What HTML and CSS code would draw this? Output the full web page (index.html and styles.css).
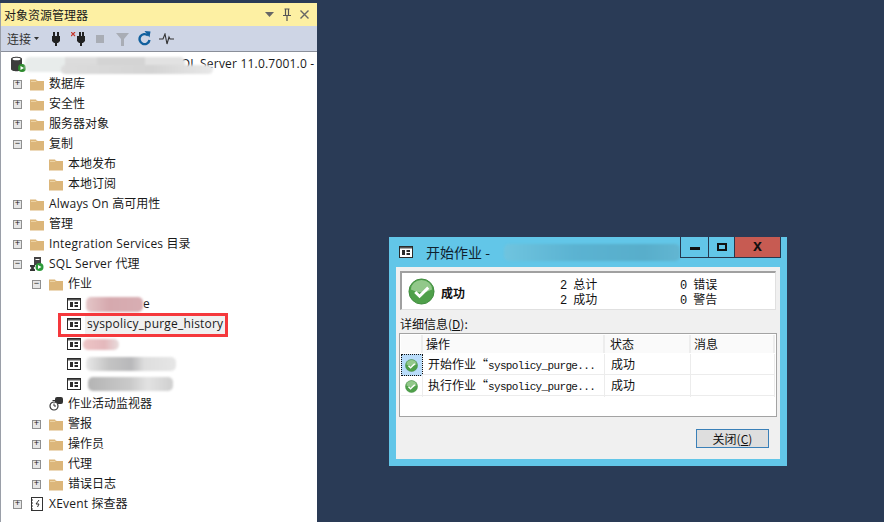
FILE: index.html
```html
<!DOCTYPE html>
<html lang="zh">
<head>
<meta charset="utf-8">
<title>对象资源管理器</title>
<link rel="stylesheet" href="styles.css">
</head>
<body>
<svg class="defs" width="0" height="0" aria-hidden="true">
  <symbol id="folder" viewBox="0 0 14 14"><path d="M0 2.500h6l1 1.500h7v9.500H0z" fill="#dcb67a"/><path d="M1 4.500h5l1-1" fill="none" stroke="#ecd3a5"/></symbol>
  <symbol id="job" viewBox="0 0 14 14"><rect x=".5" y="1.500" width="13" height="11" fill="#fff" stroke="#2a2a2a"/><rect x="1" y="2" width="12" height="1.500" fill="#555"/><rect x="3" y="5" width="3" height="5" fill="#2a2a2a"/><rect x="7.500" y="5" width="3.500" height="2" fill="#2a2a2a"/><rect x="7.500" y="8" width="3.500" height="2" fill="#2a2a2a"/></symbol>
  <symbol id="check" viewBox="0 0 28 28"><circle cx="14" cy="14" r="13" fill="#4fa04a" stroke="#3d8a3c"/><path d="M3 12a11 10 0 0 1 22 0q-11 6-22 0z" fill="#a8d6a0" opacity=".75"/><path d="M7.500 14.500l4.500 4.500 9-9" fill="none" stroke="#fff" stroke-width="3"/></symbol>
</svg>

<section class="panel">
  <header class="panel-title">
    <span>对象资源管理器</span>
    <span class="title-tools">
      <svg width="9" height="6" viewBox="0 0 9 6"><path d="M0 0h9L4.500 5z" fill="#666"/></svg>
      <svg width="8" height="13" viewBox="0 0 8 13"><path d="M1.500 1h5M2.500 1v6M5.500 1v6M0 7.500h8M4 8v5" fill="none" stroke="#555" stroke-width="1.200"/></svg>
      <svg width="9" height="9" viewBox="0 0 9 9"><path d="M.5.500l8 8M8.500.500l-8 8" fill="none" stroke="#666" stroke-width="1.400"/></svg>
    </span>
  </header>
  <div class="toolbar">
    <span class="connect">连接</span>
    <svg class="caret" width="5" height="3" viewBox="0 0 5 3"><path d="M0 0h5L2.500 3z" fill="#333"/></svg>
    <svg class="tool t-plug" width="8" height="14" viewBox="0 0 8 14"><path d="M1 0h2v4h2V0h2v4h1v5L6 11H5v3H3v-3H2L0 9V4h1z" fill="#222"/></svg>
    <svg class="tool t-xplug" width="15" height="14" viewBox="0 0 15 14"><path d="M0 0l4 4M4 0L0 4" stroke="#c5362c" stroke-width="1.200"/><path d="M8 0h2v4h1V0h2v4h1v5l-2 2h-1v3h-2v-3h-1L6 9V4h2z" fill="#222"/></svg>
    <span class="stop"></span>
    <svg class="tool t-filter" width="13" height="14" viewBox="0 0 13 14"><path d="M0 1h13L8 7v7H5V7z" fill="#a9adb5"/></svg>
    <svg class="tool t-refresh" width="13" height="15" viewBox="0 0 13 15"><path d="M10 4.500A5 5 0 1 0 11.500 9" fill="none" stroke="#11609e" stroke-width="2.400"/><path d="M6.500 0l6 .5-1 6z" fill="#11609e"/></svg>
    <svg class="tool t-pulse" width="15" height="12" viewBox="0 0 15 12"><path d="M0 6h4l2-5 2 10 2-7 1 2h4" fill="none" stroke="#333" stroke-width="1.100"/></svg>
  </div>
  <div class="tree">
    <div class="row server">
      <svg class="icon" width="18" height="16" viewBox="0 0 18 16"><path d="M1 3c0-3 11-3 11 0v10c0 3-11 3-11 0z" fill="#3c3c3c"/><ellipse cx="6.500" cy="3" rx="4" ry="1.300" fill="#fff"/><circle cx="12" cy="12" r="4" fill="#2d8a2d"/><path d="M10.500 10l3.500 2-3.500 2z" fill="#fff"/></svg>
      <span class="label lat">SQL Server 11.0.7001.0 -</span>
      <span class="smear smear-server"></span>
      <span class="smear smear-server-low"></span>
    </div>
    <div class="row l0"><span class="exp">+</span><svg class="icon"><use href="#folder"/></svg><span>数据库</span></div>
    <div class="row l0"><span class="exp">+</span><svg class="icon"><use href="#folder"/></svg><span>安全性</span></div>
    <div class="row l0"><span class="exp">+</span><svg class="icon"><use href="#folder"/></svg><span>服务器对象</span></div>
    <div class="row l0"><span class="exp">−</span><svg class="icon"><use href="#folder"/></svg><span>复制</span></div>
    <div class="row l1"><span class="noexp"></span><svg class="icon"><use href="#folder"/></svg><span>本地发布</span></div>
    <div class="row l1"><span class="noexp"></span><svg class="icon"><use href="#folder"/></svg><span>本地订阅</span></div>
    <div class="row l0"><span class="exp">+</span><svg class="icon"><use href="#folder"/></svg><span><span class="lat">Always On </span>高可用性</span></div>
    <div class="row l0"><span class="exp">+</span><svg class="icon"><use href="#folder"/></svg><span>管理</span></div>
    <div class="row l0"><span class="exp">+</span><svg class="icon"><use href="#folder"/></svg><span><span class="lat">Integration Services </span>目录</span></div>
    <div class="row l0"><span class="exp">−</span>
      <svg class="icon" viewBox="0 0 14 14"><rect x="4" y="0" width="7" height="8" fill="#444"/><rect x="5.500" y="2" width="4" height="1" fill="#fff"/><path d="M0 8h5v1.500L3.500 11 5 12.500V14H0v-1.500L1.500 11 0 9.500z" fill="#333"/><circle cx="9.500" cy="10" r="4" fill="#2d9a3a"/><path d="M8 8l3.500 2L8 12z" fill="#fff"/></svg>
      <span><span class="lat">SQL Server </span>代理</span></div>
    <div class="row l1"><span class="exp">−</span><svg class="icon"><use href="#folder"/></svg><span>作业</span></div>
    <div class="row l2"><svg class="icon"><use href="#job"/></svg><span class="job">e</span><span class="smear smear-job1"></span></div>
    <div class="row l2 picked"><svg class="icon"><use href="#job"/></svg><span class="job sel lat">syspolicy_purge_history</span><span class="mark"></span></div>
    <div class="row l2"><svg class="icon"><use href="#job"/></svg><span class="smear smear-job3"></span></div>
    <div class="row l2"><svg class="icon"><use href="#job"/></svg><span class="smear smear-job4"></span></div>
    <div class="row l2"><svg class="icon"><use href="#job"/></svg><span class="smear smear-job5"></span></div>
    <div class="row l1"><span class="noexp"></span>
      <svg class="icon" viewBox="0 0 14 14"><rect x="6" y="0" width="8" height="7" rx="2" fill="#333"/><circle cx="5" cy="9" r="4" fill="#fff" stroke="#333" stroke-width="1.200"/><path d="M5 6.500V9h2M3.500 3.500h3" fill="none" stroke="#333"/></svg>
      <span>作业活动监视器</span></div>
    <div class="row l1"><span class="exp">+</span><svg class="icon"><use href="#folder"/></svg><span>警报</span></div>
    <div class="row l1"><span class="exp">+</span><svg class="icon"><use href="#folder"/></svg><span>操作员</span></div>
    <div class="row l1"><span class="exp">+</span><svg class="icon"><use href="#folder"/></svg><span>代理</span></div>
    <div class="row l1"><span class="exp">+</span><svg class="icon"><use href="#folder"/></svg><span>错误日志</span></div>
    <div class="row l0"><span class="exp">+</span>
      <svg class="icon" viewBox="0 0 14 14"><rect x="1.500" y=".5" width="11" height="13" fill="#fff" stroke="#333"/><path d="M1 3h2M1 6h2M1 9h2M1 12h2" stroke="#333"/><path d="M9 3L6 7h3l-1.500 3" fill="none" stroke="#333"/></svg>
      <span><span class="lat">XEvent </span>探查器</span></div>
  </div>
</section>

<section class="dialog">
  <header class="dialog-title">
    <svg class="dialog-icon"><use href="#job"/></svg>
    <span class="dialog-name">开始作业 - </span>
    <span class="smear smear-title"></span>
    <div class="win-buttons">
      <span class="win-btn min"><i></i></span>
      <span class="win-btn max"><i></i></span>
      <span class="win-btn close">x</span>
    </div>
  </header>
  <div class="dialog-body">
    <div class="summary">
      <svg class="big-check"><use href="#check"/></svg>
      <strong class="result">成功</strong>
      <div class="counts"><span><b>2</b>总计</span><span><b>2</b>成功</span></div>
      <div class="counts"><span><b>0</b>错误</span><span><b>0</b>警告</span></div>
    </div>
    <div class="details-label">详细信息(<u>D</u>):</div>
    <div class="grid">
      <div class="grid-head"><span></span><span>操作</span><span>状态</span><span>消息</span></div>
      <div class="grid-row">
        <span class="state focus"><svg class="small-check"><use href="#check"/></svg></span>
        <span class="action">开始作业“<em>syspolicy_purge...</em></span><span class="status">成功</span><span></span>
      </div>
      <div class="grid-row">
        <span class="state"><svg class="small-check"><use href="#check"/></svg></span>
        <span class="action">执行作业“<em>syspolicy_purge...</em></span><span class="status">成功</span><span></span>
      </div>
    </div>
    <div class="actions"><button class="close-btn" type="button">关闭(<u>C</u>)</button></div>
  </div>
</section>
</body>
</html>
```

FILE: styles.css
```css
* { box-sizing: border-box; }
html, body { height: 100%; }
body {
  margin: 0;
  height: 522px;
  overflow: hidden;
  background: #2a3b56;
  font-family: "Open Sans", "Noto Sans CJK SC", sans-serif;
  font-size: 12px;
  color: #1a1a1a;
  position: relative;
}
.defs { position: absolute; }

.panel {
  width: 317px;
  height: 519px;
  margin-top: 3px;
  background: #fff;
  border-left: 1px solid #9a9fa8;
  display: flex;
  flex-direction: column;
  overflow: hidden;
}
.panel-title {
  height: 23px;
  flex: none;
  margin-left: -1px;
  background: #fdf0a3;
  display: flex;
  align-items: center;
  justify-content: space-between;
  padding: 0 8px 0 4px;
  font-family: "Noto Sans CJK SC", sans-serif;
  line-height: 1;
}
.title-tools { display: flex; align-items: center; gap: 9px; }
.toolbar {
  height: 26px;
  flex: none;
  margin-left: -1px;
  background: #ced5e5;
  border-bottom: 1px solid #8a8f9a;
  display: flex;
  align-items: center;
  padding-left: 7px;
}
.connect { font-family: "Noto Sans CJK SC", sans-serif; color: #333; }
.caret { margin-left: 3px; }
.tool { flex: none; }
.t-plug { margin-left: 13px; }
.t-xplug { margin-left: 11px; }
.stop { width: 8px; height: 8px; background: #a9adb5; margin-left: 10px; }
.t-filter { margin-left: 12px; }
.t-refresh { margin-left: 9px; }
.t-pulse { margin-left: 8px; }

.tree { padding-top: 2px; font-family: "Open Sans", "Noto Sans CJK SC", sans-serif; }
.lat { letter-spacing: .2px; }
.row {
  position: relative;
  height: 20px;
  display: flex;
  align-items: center;
  white-space: nowrap;
  line-height: 20px;
  font-size: 12px;
}
.row .icon { width: 14px; height: 14px; flex: none; margin-right: 5px; }
.exp {
  width: 9px;
  height: 9px;
  flex: none;
  border: 1px solid #8f8f8f;
  background: #e6e6e6;
  margin-right: 8px;
  font: 9px/7px "Liberation Mono", monospace;
  text-align: center;
  color: #222;
}
.noexp { width: 9px; flex: none; margin-right: 8px; }
.l0 { padding-left: 12px; }
.l1 { padding-left: 31px; }
.l2 { padding-left: 66px; }
.l2 .icon { margin-right: 6px; }
.server { padding-left: 9px; }
.server .icon { width: 18px; height: 16px; margin-right: 0; }
.server .label { margin-left: 146px; }
.row.l2:not(.picked) .job { padding-left: 56px; }
.sel { background: #f0f0f0; margin-left: -2px; padding: 0 2px; }
.mark {
  position: absolute;
  left: 57px;
  top: -1px;
  width: 170px;
  height: 24px;
  border: 3px solid #f5383c;
}
.smear {
  position: absolute;
  filter: blur(1px);
  border-radius: 5px;
}
.smear-server {
  left: 24px; top: 3px; width: 160px; height: 15px;
  background: linear-gradient(90deg, #e8eceb 0 25%, #dcdcdc 25% 45%, #d4d4d4 45% 75%, #e2e2e2 75%);
}
.smear-server-low {
  left: 60px; top: 11px; width: 152px; height: 9px;
  background: linear-gradient(90deg, #dcdcdc, #d4d4d4 60%, #e8e8e8);
}
.smear-job1 { left: 85px; top: 3px; width: 57px; height: 15px; background: linear-gradient(90deg, #e4c6c8, #d6a9ae 40%, #d8aeb3); }
.smear-job3 { left: 82px; top: 5px; width: 36px; height: 11px; background: linear-gradient(90deg, #eec5c6, #e4b8bc 60%, #e8dcdc); }
.smear-job4 { left: 85px; top: 3px; width: 90px; height: 14px; background: linear-gradient(90deg, #e8e8e8, #c4c4c4 25%, #b8b8ba 50%, #dedede 65%, #e6e6e6); }
.smear-job5 { left: 87px; top: 3px; width: 85px; height: 14px; background: linear-gradient(90deg, #b4b4b4, #cacaca 50%, #e2e2e2 70%, #cfcfcf); }

.dialog {
  position: absolute;
  left: 389px;
  top: 237px;
  width: 398px;
  height: 229px;
  background: #62c6e8;
  padding: 0 7px 7px;
  display: flex;
  flex-direction: column;
}
.dialog-title {
  position: relative;
  height: 30px;
  flex: none;
  display: flex;
  align-items: center;
  padding: 0 0 0 3px;
}
.dialog-icon { width: 14px; height: 14px; margin-right: 13px; }
.dialog-name {
  font: 14px/20px "Noto Sans CJK SC", sans-serif;
  color: #10222f;
}
.smear-title {
  left: 108px; top: 7px; width: 176px; height: 17px;
  background: linear-gradient(90deg, #6fc4df, #5bb3d2 40%, #58aecb 80%, #62b6d2);
}
.win-buttons {
  position: absolute;
  right: -1px;
  top: 0;
  display: flex;
  height: 21px;
  border: 1px solid #25384f;
  border-top: 0;
}
.win-btn {
  display: flex;
  align-items: center;
  justify-content: center;
  border-left: 1px solid #25384f;
  background: #62c6e8;
}
.win-btn:first-child { border-left: 0; }
.min { width: 27px; }
.max { width: 26px; }
.min i { width: 10px; height: 3px; background: #111; margin-top: 3px; }
.max i { width: 10px; height: 8px; border: 2px solid #111; }
.close {
  width: 46px;
  background: #c75b52;
  font: bold 16px/1 "Liberation Sans", sans-serif;
  color: #111;
  padding-bottom: 3px;
}
.dialog-body {
  flex: 1;
  background: #f0f0f0;
  padding: 4px 3px 10px;
  display: flex;
  flex-direction: column;
  font-family: "Noto Sans CJK SC", sans-serif;
  color: #111;
}
.summary {
  height: 39px;
  margin: 0 1px;
  background: #fff;
  border: 2px solid #a0a0a0;
  border-right-width: 1px;
  border-bottom-width: 1px;
  border-right-color: #e0e0e0;
  border-bottom-color: #e0e0e0;
  display: flex;
  align-items: center;
  padding-left: 6px;
}
.big-check { width: 27px; height: 27px; flex: none; }
.result { margin-left: 6px; width: 119px; flex: none; font-size: 12px; padding-top: 2px; }
.counts { display: flex; flex-direction: column; width: 120px; flex: none; }
.counts span { display: block; height: 15px; line-height: 15px; }
.counts b { font: 400 12px/15px "Liberation Mono", monospace; margin-right: 6px; }
.details-label { height: 23px; padding: 6px 0 0 1px; line-height: 16px; flex: none; }
.grid {
  height: 84px;
  background: #fff;
  border: 1px solid #a3a3a3;
  flex: none;
  padding: 1px;
}
.grid-head, .grid-row {
  display: grid;
  grid-template-columns: 22px 182px 86px 1fr;
  border-bottom: 1px solid #ececec;
}
.grid-head { height: 19px; background: #fafafa; line-height: 18px; border-bottom: 1px solid #fff; }
.grid-head span { border-right: 2px solid #ededed; }
.grid-head span:nth-child(2) { padding-left: 3px; }
.grid-head span:nth-child(3) { padding-left: 5px; }
.grid-head span:nth-child(4) { padding-left: 3px; }
.grid-row { height: 21px; line-height: 20px; }
.grid-row > span { border-right: 1px solid #ececec; }
.action { padding-left: 5px; white-space: nowrap; }
.action em { font: 11px/20px "Liberation Mono", monospace; font-style: normal; letter-spacing: -.65px; }
.status { padding-left: 6px; }
.state { display: flex; align-items: center; justify-content: center; }
.state.focus { background: #b9dcfa; outline: 1px dotted #111; outline-offset: -1px; }
.small-check { width: 13px; height: 13px; }
.actions { display: flex; justify-content: flex-end; padding: 12px 8px 0 0; }
.close-btn {
  width: 73px;
  height: 19px;
  padding: 0;
  background: #dedede;
  border: 1px solid #3a80b8;
  border-radius: 0;
  font: 12px/16px "Noto Sans CJK SC", sans-serif;
  color: #111;
}
```
